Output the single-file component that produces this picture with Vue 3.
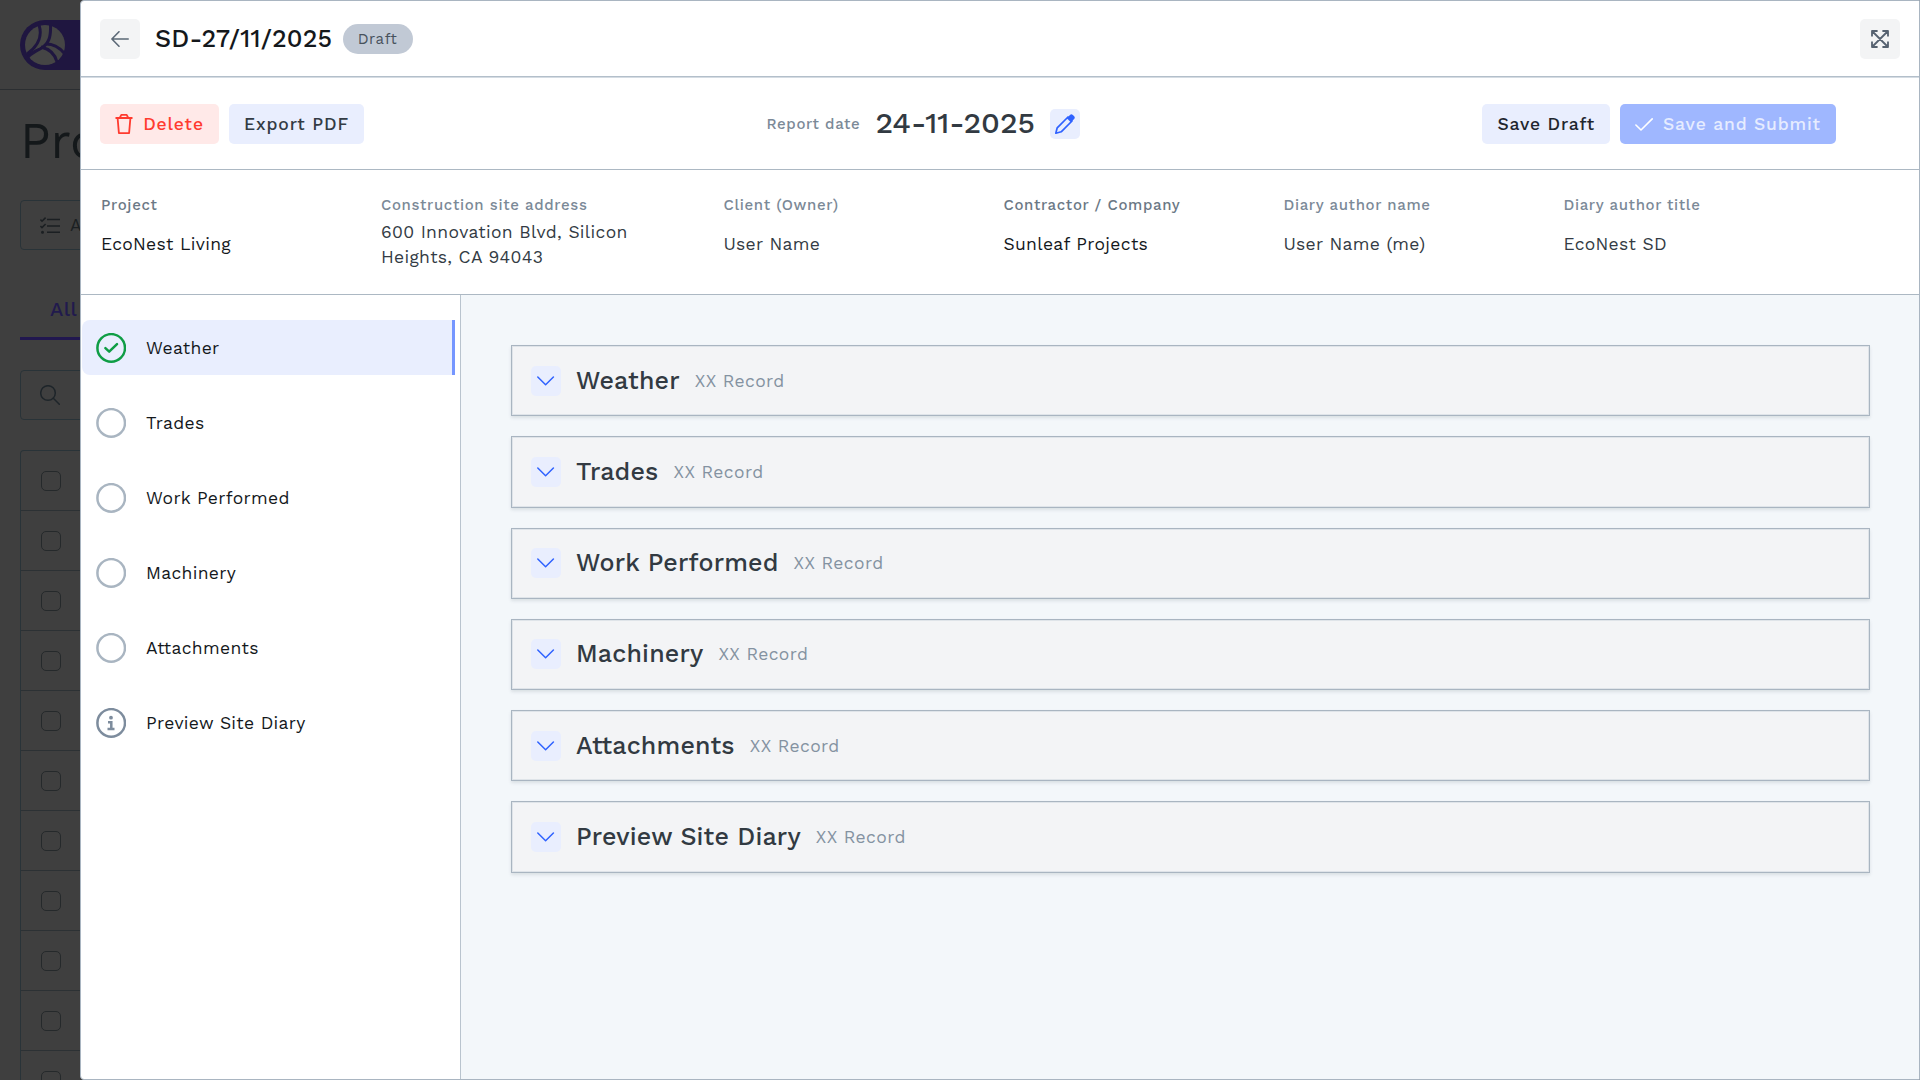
<template>
  <div class="screen">
    <div class="page">
      <div class="navbar">
        <div class="brand">
          <svg width="40" height="40" viewBox="0 0 40 40">
            <circle cx="20" cy="20" r="20" fill="#454545" />
            <g fill="none" stroke="#1f1640">
              <path d="M14 0C17 9 15 20 2 29" stroke-width="3" />
              <path d="M25.500 0C26 12 24 19 15 24C11 26 7 28 3 32" stroke-width="3" />
              <path d="M17 23C12 24 7 27 2 30" stroke-width="1.5" />
              <path d="M21 19C29 19 35 23 40 29" stroke-width="3" />
              <path d="M16 22C25 24 30 29 32 37" stroke-width="3" />
            </g>
          </svg>
        </div>
      </div>
      <h1 class="page-title">Pro</h1>
      <div class="field actions">
        <svg width="20" height="17" viewBox="0 0 20 17" fill="none" stroke="#1b1f22" stroke-width="1.6">
          <path d="M7 2.5H20M7 9H20M7 15.200H20" />
          <path d="M.4 2.600L2 4.200L5.600.6M.4 9L2 10.600L5.600 7" />
          <circle cx="2.500" cy="15.200" r=".7" />
        </svg>
        <span>A</span>
      </div>
      <div class="tabs"><span>All</span></div>
      <div class="field search">
        <svg width="20" height="20" viewBox="0 0 20 20" fill="none" stroke="#1e252a" stroke-width="1.5" stroke-linecap="round">
          <circle cx="8" cy="8" r="7.300" />
          <path d="M13.300 13.300L19.300 19.300" />
        </svg>
      </div>
      <div class="table">
        <div v-for="n in 11" :key="n" class="table-row"><span class="checkbox"></span></div>
      </div>
    </div>

    <section class="drawer">
      <header class="header">
        <button class="icon-btn">
          <svg width="18" height="16" viewBox="0 0 18 16" fill="none" stroke="#5b6876" stroke-width="1.6" stroke-linecap="round" stroke-linejoin="round">
            <path d="M17.200 8H1M8 .8L.9 8L8 15.200" />
          </svg>
        </button>
        <h2 class="title">SD-27/11/2025</h2>
        <span class="badge">Draft</span>
        <button class="icon-btn expand">
          <svg width="18" height="18" viewBox="0 0 18 18" fill="none" stroke="#566270" stroke-width="1.8" stroke-linejoin="round">
            <path d="M1 1L17 17M17 1L1 17M1 6.600V1H6.600M11.400 1H17V6.600M17 11.400V17H11.400M6.600 17H1V11.400" />
          </svg>
        </button>
      </header>

      <div class="toolbar">
        <div class="group">
          <button class="btn delete">
            <svg width="18" height="20" viewBox="0 0 18 20" fill="none" stroke="#ff3b2f" stroke-width="1.8" stroke-linejoin="round">
              <path d="M.5 4H17.500M2.600 4L3.900 19.100H14.100L15.400 4M4.700 4L6.300.9H11.700L13.300 4" />
            </svg>
            <span>Delete</span>
          </button>
          <button class="btn export"><span>Export PDF</span></button>
        </div>
        <div class="group date">
          <span class="date-label">Report date</span>
          <strong class="date-value">24-11-2025</strong>
          <button class="edit">
            <svg width="20" height="20" viewBox="0 0 20 20">
              <path d="M.8 19.200L2.200 13.800L13 3L17 7L6.200 17.800Z" fill="none" stroke="#2f62ff" stroke-width="1.700" stroke-linejoin="round" />
              <path d="M11.800 4.200L15.200.8Q16.500-.2 17.800.9L19.200 2.300Q20.300 3.600 19.200 4.900L15.800 8.200Z" fill="#2f62ff" />
            </svg>
          </button>
        </div>
        <div class="group">
          <button class="btn draft"><span>Save Draft</span></button>
          <button class="btn submit">
            <svg width="18" height="13" viewBox="0 0 18 13" fill="none" stroke="#fff" stroke-width="1.6" stroke-linecap="round" stroke-linejoin="round">
              <path d="M.9 7L6 12L17.200.9" />
            </svg>
            <span>Save and Submit</span>
          </button>
        </div>
      </div>

      <dl class="details">
        <div v-for="d in details" :key="d.label" :class="['detail', { strong: d.strong, long: d.long }]">
          <dt>{{ d.label }}</dt>
          <dd>{{ d.value }}</dd>
        </div>
      </dl>

      <div class="body">
        <nav class="steps">
          <a v-for="s in sections" :key="s.name" :class="['step', { active: s.status === 'done' }]">
            <svg width="30" height="30" viewBox="0 0 30 30" fill="none" stroke-width="2.500" :class="s.status">
              <circle cx="15.200" cy="14.900" r="13.800" />
              <path v-if="s.status === 'done'" d="M9.400 15.200L13.200 18.700L21 11.200" stroke-linecap="round" stroke-linejoin="round" />
              <template v-if="s.status === 'info'">
                <circle cx="15" cy="9.700" r="1" stroke-width="1.800" />
                <path d="M12 14.200H15.300V21M11.500 21.100H18.500" stroke-width="2.500" />
              </template>
            </svg>
            <span>{{ s.name }}</span>
          </a>
        </nav>

        <main class="content">
          <article v-for="s in sections" :key="s.name" class="card">
            <button class="toggle">
              <svg width="18" height="10" viewBox="0 0 18 10" fill="none" stroke="#2f62ff" stroke-width="1.500" stroke-linecap="round" stroke-linejoin="round">
                <path d="M.8 1L8.600 8.700L16.400 1" />
              </svg>
            </button>
            <h3>{{ s.name }}</h3>
            <span class="count">XX Record</span>
          </article>
        </main>
      </div>
    </section>
  </div>
</template>

<script setup>
const details = [
  { label: 'Project', value: 'EcoNest Living', strong: true },
  { label: 'Construction site address', value: '600 Innovation Blvd, Silicon Heights, CA 94043', long: true },
  { label: 'Client (Owner)', value: 'User Name' },
  { label: 'Contractor / Company', value: 'Sunleaf Projects', strong: true },
  { label: 'Diary author name', value: 'User Name (me)' },
  { label: 'Diary author title', value: 'EcoNest SD' }
]

const sections = [
  { name: 'Weather', status: 'done' },
  { name: 'Trades', status: 'empty' },
  { name: 'Work Performed', status: 'empty' },
  { name: 'Machinery', status: 'empty' },
  { name: 'Attachments', status: 'empty' },
  { name: 'Preview Site Diary', status: 'info' }
]
</script>

<style>
body { background: #3f3f3f; overflow: hidden; }
</style>

<style scoped>
* { box-sizing: border-box; }
.screen {
  display: flex;
  width: 1920px;
  height: 1080px;
  overflow: hidden;
  font-family: "Work Sans", Inter, "Noto Sans", sans-serif;
  color: #14181c;
}
h1, h2, h3, dl, dt, dd { margin: 0; }
button { border: 0; padding: 0; font: inherit; color: inherit; }
svg { flex: none; display: block; }
span { white-space: nowrap; }

/* dimmed page behind the drawer */
.page { width: 80px; flex: none; overflow: hidden; background: #3f3f3f; }
.navbar { height: 90px; padding: 20px 0 0 20px; border-bottom: 1px solid #2b2e31; }
.brand { width: 200px; height: 50px; padding: 5px; border-radius: 25px; background: #1f1640; }
.page-title {
  height: 110px;
  padding-left: 20px;
  font-size: 50px;
  font-weight: 400;
  line-height: 102px;
  color: #14181a;
}
.field {
  display: flex;
  align-items: center;
  width: 300px;
  height: 50px;
  margin-left: 20px;
  padding-left: 19px;
  border: 1px solid #293338;
  border-radius: 4px;
}
.actions { gap: 10px; font-size: 17.500px; color: #1b1f22; }
.tabs {
  width: 300px;
  height: 90px;
  margin-left: 20px;
  padding: 47px 0 0 30px;
  border-bottom: 3px solid #21174f;
  font-size: 20px;
  font-weight: 500;
  line-height: 24px;
  letter-spacing: 0.5px;
  color: #211a4d;
}
.search { margin-top: 30px; }
.table { width: 300px; margin: 30px 0 0 20px; border: 1px solid #293338; border-bottom: 0; border-radius: 4px; }
.table-row { display: flex; align-items: center; height: 60px; padding-left: 20px; border-bottom: 1px solid #2c3134; }
.checkbox { width: 20px; height: 20px; border: 1px solid #25292b; border-radius: 5px; }

/* drawer */
.drawer {
  display: flex;
  flex-direction: column;
  width: 1840px;
  height: 1080px;
  border: 1px solid #a9b5c1;
  border-radius: 4px 0 0 4px;
  background: #fff;
}
.header {
  display: flex;
  align-items: center;
  height: 76px;
  padding: 0 19px;
  border-bottom: 1px solid #b3bfca;
  box-shadow: 0 1px #d5dce3;
}
.icon-btn {
  display: flex;
  align-items: center;
  justify-content: center;
  width: 40px;
  height: 40px;
  border-radius: 5px;
  background: #f3f4f5;
}
.expand { margin-left: auto; }
.title {
  width: 202.500px;
  padding: 0 0 1px 15px;
  font-size: 25px;
  font-weight: 500;
  letter-spacing: 0.2px;
  white-space: nowrap;
}
.badge {
  width: 70px;
  padding-top: 1px;
  border-radius: 15px;
  background: #c1c9d5;
  font-size: 15px;
  line-height: 29px;
  letter-spacing: 0.65px;
  text-align: center;
  color: #47515c;
}

.toolbar {
  display: flex;
  align-items: center;
  justify-content: space-between;
  height: 93px;
  padding: 2px 83px 0 19px;
  border-bottom: 1px solid #acb8c3;
}
.group { display: flex; align-items: center; gap: 10px; }
.btn {
  display: flex;
  align-items: center;
  justify-content: center;
  gap: 10px;
  height: 40px;
  border-radius: 5px;
  background: #e9eefe;
  font-size: 17.500px;
  font-weight: 500;
  letter-spacing: 0.85px;
  color: #333b44;
}
.btn span { padding-bottom: 1px; }
.delete { width: 119px; background: #ffe9e8; color: #ff3b2f; }
.export { width: 135px; }
.draft { width: 127.500px; color: #1f262e; }
.submit { width: 216px; background: #9fb7ff; color: #e6ecff; }
.date { gap: 15px; }
.date-label { font-size: 15px; letter-spacing: 0.65px; font-weight: 500; color: #7b8997; }
.date-value { padding-bottom: 2px; font-size: 30px; font-weight: 500; line-height: 36px; color: #323a42; }
.edit, .toggle {
  display: flex;
  align-items: center;
  justify-content: center;
  width: 30px;
  height: 30px;
  border-radius: 5px;
  background: #e9eefe;
}

.details {
  display: grid;
  grid-template-columns: 280px 342.500px 280px 280px 280px 280px;
  height: 125px;
  padding: 23px 0 0 20px;
  border-bottom: 1px solid #acb8c3;
}
dt { font-size: 15px; font-weight: 500; line-height: 24px; letter-spacing: 0.65px; color: #7b8997; }
dd { width: 270px; padding-top: 15px; font-size: 17.500px; line-height: 25px; letter-spacing: 0.33px; color: #333b44; }
.strong dt { color: #6b7885; }
.strong dd { color: #14181c; }
.long dd { padding-top: 3px; }

.body { display: flex; flex: 1; }
.steps {
  display: flex;
  flex-direction: column;
  gap: 20px;
  width: 380px;
  padding: 25px 5px 0 1px;
  border-right: 1px solid #b9c4ce;
}
.step {
  display: flex;
  align-items: center;
  gap: 20px;
  height: 55px;
  padding-left: 14px;
  font-size: 17.500px;
  letter-spacing: 0.33px;
}
.active { border-right: 3px solid #7596ff; border-radius: 8px 0 0 8px; background: #e9eefe; }
.done { stroke: #0f9d45; }
.empty { stroke: #a9b5c1; }
.info { stroke: #7d8c9d; }

.content {
  display: flex;
  flex-direction: column;
  gap: 20px;
  flex: 1;
  padding: 50px 49px 0 50px;
  background: #f3f7fa;
}
.card {
  display: flex;
  align-items: center;
  height: 71.250px;
  padding-left: 19px;
  border: 1px solid #a9b5c1;
  background: #f3f4f6;
  box-shadow: inset 0 0 0 1px #dfe4e9, 0 2px 3px rgba(90, 105, 120, 0.16);
}
h3 { margin: 0 15px; padding-bottom: 1px; font-size: 25px; font-weight: 500; letter-spacing: 0.18px; color: #323a42; }
.count { font-size: 17.500px; letter-spacing: 0.4px; color: #8492a1; }
</style>
